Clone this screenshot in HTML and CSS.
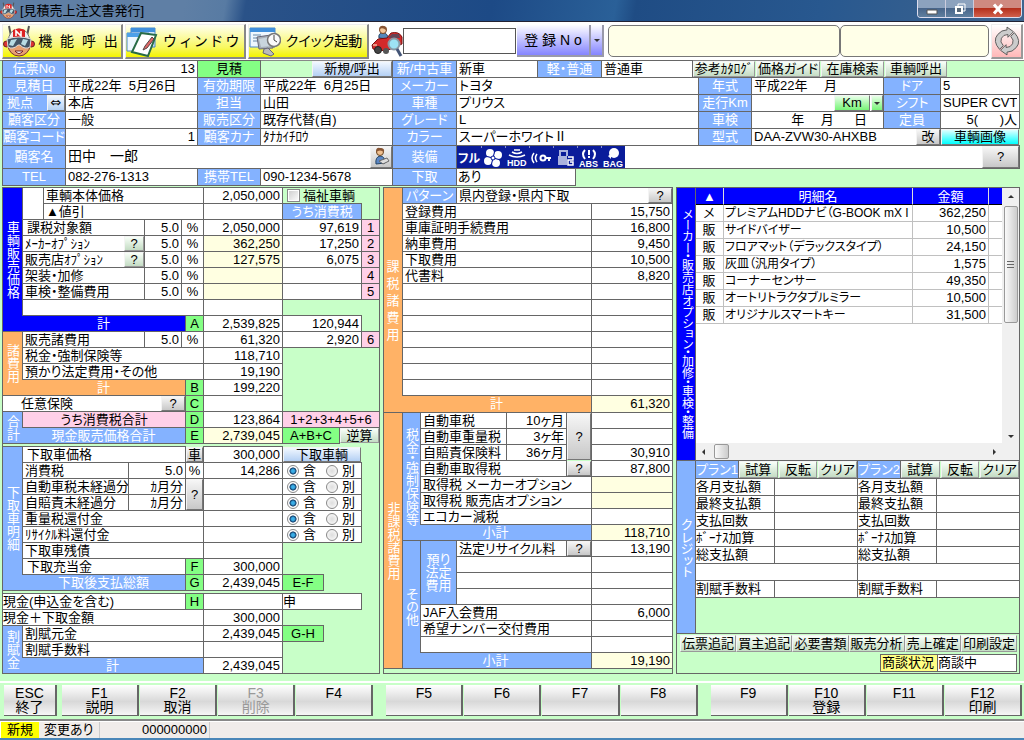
FILE: index.html
```html
<!DOCTYPE html>
<html lang="ja">
<head>
<meta charset="utf-8">
<title>見積売上注文書発行</title>
<link rel="stylesheet" href="styles.css">
</head>
<body>
<svg width="0" height="0" class="defs" aria-hidden="true">
  <symbol id="robot" viewBox="0 0 32 32">
    <path d="M8 11L6 1M24 11L26 1" stroke="#555" stroke-width="2"/>
    <circle cx="16" cy="20" r="11" fill="#e8a070" stroke="#733" stroke-width="1"/>
    <path d="M5 17Q6 4 16 4T27 17Z" fill="#eee" stroke="#777"/>
    <path d="M10 13V5Q16 2 22 5V13Z" fill="#d22"/>
    <path d="M13 11V6L18 11V6" stroke="#fff" stroke-width="1.6" fill="none"/>
    <circle cx="3.500" cy="19" r="3" fill="#d33" stroke="#622"/><circle cx="28.500" cy="19" r="3" fill="#d33" stroke="#622"/>
    <path d="M4 14Q16 10 28 14L27 22Q22 25 17 20H15Q10 25 5 22Z" fill="#456" stroke="#ddd"/>
    <path d="M8 15L14 14L10 21L6 20ZM20 14L25 15L22 21L18 19Z" fill="#b8dce4"/>
    <path d="M12 26Q16 31 20 26Z" fill="#fff" stroke="#722"/>
  </symbol>
  <symbol id="refresh" viewBox="0 0 28 30">
    <g fill="#ccc" stroke="#555" stroke-width="1">
      <path d="M6 24Q-2 15 4 8Q8 3 14 3V0L21 5L15 11V8Q10 8 8 12Q6 16 10 20Z"/>
      <path d="M22 6Q30 15 24 22Q20 27 14 27V30L7 25L13 19V22Q18 22 20 18Q22 14 18 10Z"/>
    </g>
  </symbol>
  <symbol id="person" viewBox="0 0 18 18">
    <path d="M4 17Q3 10 8 9Q13 9 13 16Z" fill="#5b86c4" stroke="#246"/>
    <circle cx="8" cy="5" r="3.500" fill="#f0c090" stroke="#642"/>
    <path d="M4 5Q4 0 8 1Q13 1 12 5Q8 2 4 5Z" fill="#853"/>
    <path d="M7 14L15 11L17 14L11 17Z" fill="#ddd" stroke="#666"/>
  </symbol>
</svg>

<header class="titlebar">
  <svg class="app-icon"><use href="#robot"/></svg>
  <span class="title">[見積売上注文書発行]</span>
  <div class="winbtns">
    <button aria-label="最小化"><svg width="12" height="12"><path d="M1 7h10v4H1z" fill="#fff" stroke="#555"/></svg></button>
    <button aria-label="元に戻す"><svg width="12" height="12"><path d="M4 1h7v7H4z" fill="none" stroke="#fff" stroke-width="1"/><path d="M2 4h6v6H2z" fill="#567" stroke="#fff" stroke-width="2"/></svg></button>
    <button class="close" aria-label="閉じる"><svg width="14" height="12"><path d="M3 1.500L11 10.500M11 1.500L3 10.500" stroke="#fff" stroke-width="3"/></svg></button>
  </div>
</header>

<nav class="toolbar">
  <button class="tool"><svg class="big"><use href="#robot"/></svg><span>機  能  呼  出</span></button>
  <button class="tool"><svg class="big" viewBox="0 0 32 32"><path d="M5 3h24v19H5z" fill="#cfe6fa" stroke="#4a86c8"/><path d="M5 3h24v4H5z" fill="#3f8fdc"/><path d="M1 8h22v18H1z" fill="#eef7fe" stroke="#4a86c8"/><path d="M1 8h22v4H1z" fill="#4da0e8"/><path d="M15 8L30 10L22 31L6 27Z" fill="#fff" stroke="#286b46" stroke-width="2"/><path d="M26 12L19 21L17 25L21 23L28 14Z" fill="#d66" stroke="#544"/></svg><span>ウ ィ ン ド ウ</span></button>
  <button class="tool"><svg class="big" viewBox="0 0 32 32"><path d="M1 3h25v19H1z" fill="#eef7fe" stroke="#4a86c8"/><path d="M1 3h25v4H1z" fill="#3f8fdc"/><path d="M4 10h8M4 13h8M4 16h6" stroke="#68a"/><path d="M8 12L22 10L24 23L10 24Z" fill="#a7afb8" stroke="#667"/><path d="M10 14L20 12L22 21L12 22Z" fill="#c9d5dd"/><path d="M15 24L14 28L22 31L25 29L19 23Z" fill="#bbb" stroke="#667"/><circle cx="25" cy="15" r="6.500" fill="#fafafa" stroke="#777" stroke-width="1.500"/><path d="M25 10v5l3 2" stroke="#444" fill="none"/></svg><span>クイック起動</span></button>
  <svg class="big car" viewBox="0 0 32 32"><path d="M8 13Q7 8 12 8Q17 8 17 14Z" fill="#58b" stroke="#246"/><circle cx="12" cy="5" r="3.500" fill="#f3c79a" stroke="#742"/><path d="M8 4Q9 0 13 1Q17 2 15 5Q12 2 8 4Z" fill="#853"/><path d="M1 20L7 14L16 13L20 8Q28 6 31 12L31 19L15 26L2 24Z" fill="#d42a2a" stroke="#711"/><path d="M17 13L21 9L28 9L29 13Z" fill="#645"/><circle cx="7" cy="25" r="3.500" fill="#444" stroke="#222"/><circle cx="15" cy="26" r="3" fill="#555"/><path d="M2 20h4" stroke="#ffd"/><circle cx="23" cy="19" r="5.500" fill="#9de3f4" stroke="#8a9aa5" stroke-width="2"/><path d="M26 24L30 31" stroke="#457" stroke-width="3"/></svg>
  <input class="search" aria-label="検索番号">
  <button class="reg">登 録 N o</button><button class="reg arrow" aria-label="検索種別"><i class="tri drop"></i></button>
  <div class="notice n1"></div><div class="notice n2"></div>
  <button class="reload" aria-label="更新"><svg width="26" height="30"><use href="#refresh"/></svg></button>
</nav>

<section class="head">
  <div class="head-left">
    <label class="c b" for="no">伝票No</label><input id="no" class="c r" value="13"><div class="c g">見積</div>
    <div class="fl call"><button class="bb">新規/呼出</button></div>
    <label class="c b" for="d1">見積日</label><input id="d1" class="c date" value="平成22年  5月26日"><label class="c b" for="d2">有効期限</label><input id="d2" class="c date" value="平成22年  6月25日">
    <div class="c b base"><label for="base">拠点</label><button class="bb" aria-label="拠点切替">⇔</button></div><input id="base" class="c" value="本店"><label class="c b" for="staff">担当</label><input id="staff" class="c" value="山田">
    <label class="c b" for="kk">顧客区分</label><input id="kk" class="c" value="一般"><label class="c b" for="hk">販売区分</label><input id="hk" class="c" value="既存代替(自)">
    <label class="c b" for="kc">顧客コード</label><input id="kc" class="c r" value="1"><label class="c b" for="kana">顧客カナ</label><input id="kana" class="c" value="ﾀﾅｶｲﾁﾛｳ">
    <label class="c b tall" for="name">顧客名</label><div class="c w s3 fl"><input id="name" class="name" value="田中　一郎"><button class="gb pers" aria-label="顧客情報"><svg width="18" height="18"><use href="#person"/></svg></button></div>
    <label class="c b" for="tel">TEL</label><input id="tel" class="c" value="082-276-1313"><label class="c b" for="mob">携帯TEL</label><input id="mob" class="c" value="090-1234-5678">
  </div>
  <div class="head-right">
    <div class="row1 s6">
      <label class="c b" for="nu">新/中古車</label><input id="nu" class="c" value="新車"><label class="c b" for="ks">軽・普通</label><input id="ks" class="c" value="普通車">
      <button class="gn">参考ｶﾀﾛｸﾞ</button><button class="gn">価格ガイド</button><button class="gn">在庫検索</button><button class="gn">車輌呼出</button>
    </div>
    <label class="c b" for="mk">メーカー</label><input id="mk" class="c" value="トヨタ"><label class="c b" for="yr">年式</label><input id="yr" class="c" value="平成22年　 月"><label class="c b" for="dr">ドア</label><input id="dr" class="c" value="5">
    <label class="c b" for="sy">車種</label><input id="sy" class="c" value="プリウス"><label class="c b" for="km">走行Km</label><div class="c w fl"><input id="km"><button class="km">Km</button><button class="km kmarrow" aria-label="単位"><i class="tri drop"></i></button></div><label class="c b" for="sh">シフト</label><input id="sh" class="c" value="SUPER CVT">
    <label class="c b" for="gr">グレード</label><input id="gr" class="c" value="L"><label class="c b" for="sk">車検</label><input id="sk" class="c shaken" value="年　 月　  日"><label class="c b" for="ti">定員</label><input id="ti" class="c r" value="5(      )人">
    <label class="c b" for="cl">カラー</label><input id="cl" class="c" value="スーパーホワイトⅡ"><label class="c b" for="kt">型式</label><div class="c w s2 fl"><input id="kt" value="DAA-ZVW30-AHXBB"><button class="gb kai">改</button></div><button class="cy">車輌画像</button>
    <div class="c b tall">装備</div><div class="c w s5 fl equip">
      <svg width="168" height="22" viewBox="0 0 168 22" role="img" aria-label="装備アイコン"><path d="M0 0h168v22H0z" fill="#0a1c9a"/><path d="M24 1h1M48 1h1M72 1h1M96 1h1M120 1h1M144 1h1" stroke="#fff"/><g fill="#fff">
        <text x="1" y="17" font-size="12" font-weight="bold">フル</text>
        <g transform="translate(36 12)"><ellipse cx="-3" cy="-5" rx="4" ry="4"/><ellipse cx="3" cy="5" rx="4" ry="4"/><ellipse cx="-5" cy="3" rx="4" ry="4"/><ellipse cx="5" cy="-3" rx="4" ry="4"/><path d="M-8 -2L8 2M-2 8L2 -8" stroke="#0a1c9a"/><circle r="2" stroke="#0a1c9a"/></g>
        <text class="sm" x="50" y="20">HDD</text><path d="M52 9Q60 13 68 9M55 6Q60 9 65 6M57 4h6" stroke="#fff" fill="none" stroke-width="1.500"/>
        <path d="M77 7q-4 5 0 10M80 8q-3 4 0 8" stroke="#fff" fill="none" stroke-width="1.500"/><circle cx="86" cy="12" r="2.500" fill="none" stroke="#fff" stroke-width="2"/><path d="M88 12h6M92 12v3" stroke="#fff" stroke-width="2"/>
        <path d="M101 10h9v9h-9z" fill="#aab2de"/><path d="M103 10V5h7v5" stroke="#aab2de" fill="none" stroke-width="2"/><path d="M111 11h5v3h-5v5h5v-3h-3" stroke="#fff" fill="none" stroke-width="1.500"/>
        <path d="M128 4q-4 4 0 9M136 4q4 4 0 9" stroke="#fff" fill="none" stroke-width="2"/><path d="M131 4h2v5h-2zM131 10h2v2h-2z"/><text class="sm" x="122" y="21">ABS</text>
        <circle cx="157" cy="7" r="5"/><path d="M151 10l3-2v5z"/><text class="sm" x="146" y="21">BAG</text></g></svg>
      <button class="gb q6" aria-label="装備ヘルプ">?</button></div>
    <label class="c b" for="st">下取</label><div class="fl s5"><input id="st" class="c trade" value="あり"></div>
  </div>
</section>

<main class="main">
<section class="panel">
  <div class="lg">
    <div class="c bl v r9"><span>車輌販売価格</span></div><div class="c w k2 rr2"></div>
    <label class="c w k3-7" for="a1">車輌本体価格</label><input id="a1" class="c r amt" value="2,050,000"><label class="welfare"><input type="checkbox">福祉車輌</label>
    <label class="c w k3-7" for="a2">▲値引</label><input id="a2" class="c r amt"><div class="c b k9">うち消費税</div>
    <label class="c w k2-4 ind" for="a3">課税対象額</label><input class="c r rate" aria-label="課税対象額 税率" value="5.0"><div class="c w pc">%</div><input id="a3" class="c r amt" value="2,050,000"><output class="c w r k9">97,619</output><div class="c p">1</div>
    <div class="c w k2-4 fl"><label for="a4">ﾒｰｶｰｵﾌﾟｼｮﾝ</label><button class="gn q" aria-label="メーカーオプション検索">?</button></div><input class="c r rate" aria-label="メーカーオプション 税率" value="5.0"><div class="c w pc">%</div><input id="a4" class="c r amt cr" value="362,250"><output class="c w r k9">17,250</output><div class="c p">2</div>
    <div class="c w k2-4 fl"><label for="a5">販売店ｵﾌﾟｼｮﾝ</label><button class="gn q" aria-label="販売店オプション検索">?</button></div><input class="c r rate" aria-label="販売店オプション 税率" value="5.0"><div class="c w pc">%</div><input id="a5" class="c r amt cr" value="127,575"><output class="c w r k9">6,075</output><div class="c p">3</div>
    <label class="c w k2-4" for="a6">架装・加修</label><input class="c r rate" aria-label="架装 税率" value="5.0"><div class="c w pc">%</div><input id="a6" class="c r amt cr"><output class="c w r k9"></output><div class="c p">4</div>
    <label class="c w k2-4" for="a7">車検・整備費用</label><input class="c r rate" aria-label="車検 税率" value="5.0"><div class="c w pc">%</div><input id="a7" class="c r amt cr"><output class="c w r k9"></output><div class="c p">5</div>
    <div class="c w k2-7"></div><output class="c w r amt"></output>
    <div class="c bl tot k2-6">計</div><div class="c g k7">A</div><output class="c w r amt">2,539,825</output><output class="c w r k9">120,944</output>
    <div class="c o v r4"><span>諸費用</span></div>
    <label class="c w k2-4" for="b1">販売諸費用</label><input class="c r rate" aria-label="販売諸費用 税率" value="5.0"><div class="c w pc">%</div><input id="b1" class="c r amt" value="61,320"><output class="c w r k9">2,920</output><div class="c p">6</div>
    <label class="c w k2-7" for="b2">税金・強制保険等</label><input id="b2" class="c r amt" value="118,710">
    <label class="c w k2-7" for="b3">預かり法定費用・その他</label><input id="b3" class="c r amt" value="19,190">
    <div class="c o tot k2-6">計</div><div class="c g k7">B</div><output class="c w r amt">199,220</output>
    <div class="c w k1-6 fl ins"><label for="c1">任意保険</label><button class="gb q" aria-label="任意保険検索">?</button></div><div class="c g k7">C</div><input id="c1" class="c r amt">
    <div class="c b v rr2"><span>合計</span></div><div class="c p k2-6">うち消費税合計</div><div class="c g k7">D</div><output class="c w r amt">123,864</output><div class="c p k9-10">1+2+3+4+5+6</div>
    <div class="c b tot k2-6">現金販売価格合計</div><div class="c g k7">E</div><output class="c cr r amt">2,739,045</output><div class="fl k9-10"><div class="c g grow">A+B+C</div><button class="gn rev">逆算</button></div>
  </div>
  <div class="lg">
    <div class="c b v r9"><span>下取車明細</span></div>
    <label class="c w k2-6 ind" for="e1">下取車価格</label><button class="gb k7">車</button><input id="e1" class="c r amt" value="300,000"><button class="bb k9">下取車輌</button>
    <label class="c w k2-3" for="e2">消費税</label><input class="c r k4-6" aria-label="消費税率" value="5.0"><div class="c w pc k7">%</div><input id="e2" class="c r amt" value="14,286"><div class="c w k9 rad"><label><input type="radio" name="r1" checked>含</label><label><input type="radio" name="r1">別</label></div>
    <label class="c w k2-3" for="e3">自動車税未経過分</label><div class="c w r k4-6">ｶ月分</div><button class="gb k7 rr2">?</button><input id="e3" class="c r amt"><div class="c w k9 rad"><label><input type="radio" name="r2" checked>含</label><label><input type="radio" name="r2">別</label></div>
    <label class="c w k2-3" for="e4">自賠責未経過分</label><div class="c w r k4-6">ｶ月分</div><input id="e4" class="c r amt"><div class="c w k9 rad"><label><input type="radio" name="r3" checked>含</label><label><input type="radio" name="r3">別</label></div>
    <label class="c w k2-7" for="e5">重量税還付金</label><input id="e5" class="c r amt"><div class="c w k9 rad"><label><input type="radio" name="r4" checked>含</label><label><input type="radio" name="r4">別</label></div>
    <label class="c w k2-7" for="e6">ﾘｻｲｸﾙ料還付金</label><input id="e6" class="c r amt"><div class="c w k9 rad"><label><input type="radio" name="r5" checked>含</label><label><input type="radio" name="r5">別</label></div>
    <label class="c w k2-7" for="e7">下取車残債</label><input id="e7" class="c r amt">
    <label class="c w k2-6 ind" for="e8">下取充当金</label><div class="c g k7">F</div><input id="e8" class="c r amt" value="300,000">
    <div class="c b tot k2-6">下取後支払総額</div><div class="c g k7">G</div><output class="c w r amt">2,439,045</output><div class="c g k9 half">E-F</div>
  </div>
  <div class="lg">
    <label class="c w k1-6 flush" for="f1">現金(申込金を含む)</label><div class="c g k7">H</div><input id="f1" class="c r amt"><input class="c k9 flush" aria-label="申込金" value="申">
    <label class="c w k1-7 flush" for="f2">現金＋下取金額</label><input id="f2" class="c r amt" value="300,000">
    <div class="c b v rr3"><span>割賦金</span></div>
    <label class="c w k2-7" for="f3">割賦元金</label><input id="f3" class="c r amt" value="2,439,045"><div class="c g k9 half">G-H</div>
    <label class="c w k2-7" for="f4">割賦手数料</label><input id="f4" class="c r amt">
    <div class="c b tot k2-7">計</div><output class="c w r amt">2,439,045</output>
  </div>
</section>

<section class="panel">
  <div class="mg m1">
    <div class="c o stack r14"><span>課税諸費用</span></div>
    <label class="c b m2-3" for="pt">パターン</label><div class="c w m4-7 fl"><input id="pt" value="県内登録・県内下取"><button class="gb q" aria-label="パターン検索">?</button></div>
    <input class="c m2-6" aria-label="費目1" value="登録費用"><input class="c r" aria-label="登録費用" value="15,750">
    <input class="c m2-6" aria-label="費目2" value="車庫証明手続費用"><input class="c r" aria-label="車庫証明" value="16,800">
    <input class="c m2-6" aria-label="費目3" value="納車費用"><input class="c r" aria-label="納車費用" value="9,450">
    <input class="c m2-6" aria-label="費目4" value="下取費用"><input class="c r" aria-label="下取費用" value="10,500">
    <input class="c m2-6" aria-label="費目5" value="代書料"><input class="c r" aria-label="代書料" value="8,820">
    <input class="c m2-6" aria-label="費目6"><input class="c r" aria-label="金額6">
    <input class="c m2-6" aria-label="費目7"><input class="c r" aria-label="金額7">
    <input class="c m2-6" aria-label="費目8"><input class="c r" aria-label="金額8">
    <input class="c m2-6" aria-label="費目9"><input class="c r" aria-label="金額9">
    <input class="c m2-6" aria-label="費目10"><input class="c r" aria-label="金額10">
    <input class="c m2-6" aria-label="費目11"><input class="c r" aria-label="金額11">
    <input class="c m2-6" aria-label="費目12"><input class="c r" aria-label="金額12">
    <div class="c o tot m2-6">計</div><output class="c cr r">61,320</output>
  </div>
  <div class="mg m2">
    <div class="c o v r16 low"><span>非課税諸費用</span></div>
    <div class="c b v r8"><span>税金・強制保険等</span></div>
    <label class="c w m3-4" for="g1">自動車税</label><input class="c r" aria-label="自動車税 月数" value="10ヶ月"><button class="gb rr3" aria-label="税額検索">?</button><input id="g1" class="c r">
    <label class="c w m3-4" for="g2">自動車重量税</label><input class="c r" aria-label="重量税 年数" value="3ヶ年"><input id="g2" class="c r m7">
    <label class="c w m3-4" for="g3">自賠責保険料</label><input class="c r" aria-label="自賠責 月数" value="36ヶ月"><input id="g3" class="c r m7" value="30,910">
    <label class="c w m3-5" for="g4">自動車取得税</label><button class="gb" aria-label="取得税検索">?</button><input id="g4" class="c r" value="87,800">
    <label class="c w m3-6" for="g5">取得税 メーカーオプション</label><input id="g5" class="c r cr">
    <label class="c w m3-6" for="g6">取得税 販売店オプション</label><input id="g6" class="c r cr">
    <label class="c w m3-6" for="g7">エコカー減税</label><input id="g7" class="c r">
    <div class="c b tot m3-6 sub">小計</div><output class="c cr r">118,710</output>
    <div class="c b v r8 low2"><span>その他</span></div>
    <div class="c b dep">預り<br>法定<br>費用</div>
    <label class="c w m4-5" for="h1">法定リサイクル料</label><button class="gb" aria-label="リサイクル料検索">?</button><input id="h1" class="c r" value="13,190">
    <input class="c m4-6" aria-label="法定費用2"><input class="c r" aria-label="法定費用額2">
    <input class="c m4-6" aria-label="法定費用3"><input class="c r" aria-label="法定費用額3">
    <input class="c m4-6" aria-label="法定費用4"><input class="c r" aria-label="法定費用額4">
    <label class="c w m3-6" for="h5">JAF入会費用</label><input id="h5" class="c r" value="6,000">
    <label class="c w m3-6" for="h6">希望ナンバー交付費用</label><input id="h6" class="c r">
    <input class="c m3-6" aria-label="その他費用"><input class="c r" aria-label="その他費用額">
    <div class="c b tot m3-6 sub">小計</div><output class="c cr r">19,190</output>
  </div>
</section>

<section class="panel rp">
  <div class="opts">
    <div class="c bl v opv"><span>メーカー・販売店オプション・加修・車検・整備</span></div>
    <div class="c w listwrap">
      <div class="list">
        <table>
          <colgroup><col class="t1"><col><col class="t3"><col class="t4"></colgroup>
          <thead><tr><th>▲</th><th>明細名</th><th>金額</th><th></th></tr></thead>
          <tbody>
            <tr><td>メ</td><td>プレミアムHDDナビ（G-BOOK mX I</td><td>362,250</td><td></td></tr>
            <tr><td>販</td><td>サイドバイザー</td><td>10,500</td><td></td></tr>
            <tr><td>販</td><td>フロアマット（デラックスタイプ）</td><td>24,150</td><td></td></tr>
            <tr><td>販</td><td>灰皿（汎用タイプ）</td><td>1,575</td><td></td></tr>
            <tr><td>販</td><td>コーナーセンサー</td><td>49,350</td><td></td></tr>
            <tr><td>販</td><td>オートリトラクタブルミラー</td><td>10,500</td><td></td></tr>
            <tr><td>販</td><td>オリジナルスマートキー</td><td>31,500</td><td></td></tr>
          </tbody>
        </table>
        <div class="hs"><i class="tri tl"></i><i class="thumb ht"></i><i class="tri trr"></i></div>
      </div>
      <div class="vs"><i class="tri tu"></i><i class="thumb vt"></i><i class="tri td"></i></div>
    </div>
  </div>
  <div class="credit">
    <div class="c b v"><span>クレジット</span></div>
    <div class="plans">
      <div class="plan">
        <div class="ph"><div class="c b">プラン1</div><button class="gn">試算</button><button class="gn">反転</button><button class="gn">クリア</button></div>
        <label class="c w flush" for="p1">各月支払額</label><input id="p1" class="c r">
        <label class="c w flush" for="p2">最終支払額</label><input id="p2" class="c r">
        <label class="c w flush" for="p3">支払回数</label><input id="p3" class="c r">
        <label class="c w flush" for="p4">ﾎﾞｰﾅｽ加算</label><input id="p4" class="c r">
        <label class="c w flush" for="p5">総支払額</label><input id="p5" class="c r">
        <div class="c w s2"></div>
        <label class="c w flush" for="p6">割賦手数料</label><input id="p6" class="c r">
      </div>
      <div class="plan">
        <div class="ph"><div class="c b">プラン2</div><button class="gn">試算</button><button class="gn">反転</button><button class="gn">クリア</button></div>
        <label class="c w flush" for="q1">各月支払額</label><input id="q1" class="c r">
        <label class="c w flush" for="q2">最終支払額</label><input id="q2" class="c r">
        <label class="c w flush" for="q3">支払回数</label><input id="q3" class="c r">
        <label class="c w flush" for="q4">ﾎﾞｰﾅｽ加算</label><input id="q4" class="c r">
        <label class="c w flush" for="q5">総支払額</label><input id="q5" class="c r">
        <div class="c w s2"></div>
        <label class="c w flush" for="q6">割賦手数料</label><input id="q6" class="c r">
      </div>
    </div>
  </div>
  <div class="acts"><button class="gn">伝票追記</button><button class="gn">買主追記</button><button class="gn">必要書類</button><button class="gn">販売分析</button><button class="gn">売上確定</button><button class="gn">印刷設定</button></div>
  <div class="nego"><label class="c y" for="ng">商談状況</label><input id="ng" class="c" value="商談中"></div>
</section>
</main>

<footer>
  <div class="keys">
    <div class="kg esc"><button>ESC<br>終了</button></div>
    <div class="kg"><button><span>F1<br>説明</span></button><button><span>F2<br>取消</span></button><button disabled><span>F3<br>削除</span></button><button><span>F4<br>&nbsp;</span></button></div>
    <div class="kg"><button><span>F5<br>&nbsp;</span></button><button><span>F6<br>&nbsp;</span></button><button><span>F7<br>&nbsp;</span></button><button><span>F8<br>&nbsp;</span></button></div>
    <div class="kg"><button><span>F9<br>&nbsp;</span></button><button><span>F10<br>登録</span></button><button><span>F11<br>&nbsp;</span></button><button><span>F12<br>印刷</span></button></div>
  </div>
  <div class="status"><span class="new">新規</span><span class="chg">変更あり</span><span class="num">000000000</span></div>
</footer>
</body>
</html>
```
FILE: styles.css
```css
* { box-sizing: border-box; }
:root { --line: #666; --sky: #84b2ff; --mint: #c8ffc8; --row: 15px; }
body {
  margin: 0; min-height: 100vh; display: flex; flex-direction: column;
  background: var(--mint); color: #000;
  font: 13px/15px "Liberation Sans", "Noto Sans CJK JP", sans-serif;
  font-feature-settings: "palt";
}
input, button { font: inherit; color: inherit; font-feature-settings: inherit; margin: 0; min-width: 0; border-radius: 0; }
input { border: 0; padding: 0 2px; background: #fff; width: 100%; }
button { padding: 0; white-space: nowrap; line-height: 13px; overflow: hidden; }
.defs { position: absolute; }

.titlebar { height: 22px; display: flex; align-items: center; background: linear-gradient(100deg, #5f7fa5 0 18%, #587ba3 22%, #2a5288 24%, #1d4a86 48%, #2a6098 60%, #1f4c84 62%, #28588f 80%, #3f658f); border-bottom: 1px solid #223; }
.app-icon { width: 17px; height: 17px; }
.title { margin-left: 3px; }
.winbtns { margin-left: auto; margin-right: 2px; display: flex; align-self: start; height: 18px; border: 1px solid #dde; border-top: 0; border-radius: 0 0 4px 4px; overflow: hidden; }
.winbtns button { width: 28px; border: 0; border-right: 1px solid #ccd; background: linear-gradient(#8ca2be 45%, #48658a 50%, #5f7f9f); }
.winbtns button svg { vertical-align: middle; }
.winbtns .close { width: 47px; border: 0; background: linear-gradient(#cf8a80 45%, #b4301c 50%, #d0604c); }

.toolbar { height: 39px; display: flex; background: #fff; padding: 2px 1px 0 2px; border-bottom: 1px solid #888; }
.tool { width: 121px; height: 35px; margin-right: 2px; display: flex; align-items: center; border: 1px solid #eee; border-right: 2px solid #888; border-bottom: 2px solid #888; background: linear-gradient(#fffff0, #f8f860 70%, #f4f400); }
.tool span { flex: 1; white-space: pre; font-size: 14px; line-height: 20px; text-align: center; }
.big { width: 32px; height: 32px; flex: none; }
.car { margin-top: 1px; }
.search { width: 113px; height: 26px; margin-top: 4px; border: 1px solid #555; margin-right: 1px; }
.reg { width: 74px; height: 32px; margin-top: 1px; font-size: 14px; border: 0; border-right: 2px solid #99a; border-bottom: 2px solid #99a; background: linear-gradient(#fdfdff, #8484ff); white-space: pre; }
.arrow { width: 13px; }
.notice { height: 32px; margin-top: 1px; background: #ffffe8; border: 1px solid #777; border-radius: 5px; }
.n1 { flex: 232; margin-left: 4px; }
.n2 { flex: 149; margin-right: 2px; }
.reload { width: 32px; height: 35px; border: 1px solid #eee; border-right: 2px solid #999; border-bottom: 2px solid #999; background: linear-gradient(#fff, #ffb8b8); }
.reload svg { vertical-align: middle; }

/* ruled cells: every cell draws its own 1px frame into the grid gap */
.c { box-shadow: 0 0 0 1px var(--line); padding: 0 2px; white-space: nowrap; min-width: 0; min-height: 0; text-align: left; }
.w { background: #fff; }
.b, .bl, .o, .g, .p { text-align: center; color: #fff; padding: 0; }
.b { background: var(--sky); }
.bl { background: #00f; }
.o { background: #ffb266; }
.g { background: #84ff84; color: #000; }
.p { background: #ffd0e8; color: #000; }
.cr { background: #ffffe1; }
.y { background: #ffff84; }
.r { text-align: right; }
.ind { padding-left: 4px; }
.flush { padding-left: 0; }
.fl { display: flex; gap: 1px; min-width: 0; }
.c.fl { padding-right: 0; }
.fl > label { flex: 1; }
.fl > input { flex: 1; padding: 0; }
.grow { flex: 1; }
.s2 { grid-column: span 2; }
.s3 { grid-column: span 3; }
.s5 { grid-column: span 5; }
.s6 { grid-column: span 6; }

.gb, .bb, .gn, .cy, .km { border: 1px solid #f4f4f4; border-right-color: #777; border-bottom-color: #777; background: linear-gradient(#f6f6f6, #c8c8c8); }
.bb { background: linear-gradient(#f2f8ff, #b4d0f4); }
.gn { background: linear-gradient(#f8fff8, #c4dcc4); border-right-color: #999; border-bottom-color: #999; }
.cy { background: linear-gradient(#e0ffff, #00ffff); }
.km { background: linear-gradient(#e8ffe8, #78f478); width: 36px; }
.kmarrow { width: 12px; }

.head { display: grid; grid-template-columns: 389fr 626fr; gap: 1px; padding: 0 5px 0 3px; line-height: 16px; }
.head-left, .head-right { display: grid; gap: 1px; grid-template-rows: repeat(5, 16px) 22px 16px; }
.head-left { grid-template-columns: 62px 1fr 62px 1fr; }
.head-right { grid-template-columns: 63px 1fr 52px 131px 56px 78px; }
.head input { line-height: 16px; }
.head button { line-height: 14px; }
.call .bb { width: 80px; margin-left: auto; }
.base { display: flex; padding-left: 4px; }
.base .bb { width: 18px; margin-left: auto; color: #000; font-family: "DejaVu Sans", sans-serif; }
.head .tall { line-height: 22px; }
.head .name { line-height: 18px; padding-bottom: 3px; font-size: 14px; }
.pers { width: 22px; }
.row1 { display: grid; gap: 1px; grid-template-columns: 63px 80px 63px 90px 62px 64px 63px 62px; }
.head .date, .head #name { white-space: pre; }
.shaken { text-align: right; padding-right: 16px; }
.kai { width: 24px; }
.equip { padding: 0; justify-content: space-between; }
.equip text { font-family: "Noto Sans CJK JP", sans-serif; }
.equip .sm { font: bold 9px "Liberation Sans", sans-serif; }
.q6 { width: 37px; }
.fl > .trade { flex: none; width: 118px; padding: 0 1px; }

.main { display: grid; grid-template-columns: 376fr 288fr 342fr; gap: 5px; padding: 3px 5px 0 3px; }
.panel { box-shadow: 0 0 0 1px var(--line); min-width: 0; }

.lg { display: grid; gap: 1px; grid-auto-rows: var(--row); grid-template-columns: 19px 20px 1fr 15px 36px 3px 17px 78px 78px 17px; }
.lg + .lg { margin-top: 4px; }
.v { display: flex; align-items: center; justify-content: center; }
.v span { writing-mode: vertical-rl; line-height: 17px; font-feature-settings: "vpal"; }
.stack { display: flex; align-items: center; justify-content: center; }
.stack span { width: 13px; line-height: 17px; white-space: normal; word-break: break-all; }
.tot { margin-left: -1px; box-shadow: 0 -1px var(--line), 0 1px var(--line); }
.lg > .v { grid-column: 1; }
.k2 { grid-column: 2; }
.k7 { grid-column: 7; }
.k9 { grid-column: 9; }
.amt { grid-column: 8; }
.rate { grid-column: 5; }
.pc { grid-column: 6 / 8; text-align: center; }
.pc.k7 { grid-column: 7; }
.k1-6 { grid-column: 1 / 7; }
.k1-7 { grid-column: 1 / 8; }
.k2-3 { grid-column: 2 / 4; }
.k2-4 { grid-column: 2 / 5; }
.k2-6 { grid-column: 2 / 7; }
.k2-7 { grid-column: 2 / 8; }
.k3-7 { grid-column: 3 / 8; }
.k4-6 { grid-column: 4 / 7; }
.k9-10 { grid-column: 9 / 11; }
.rr2 { grid-row: span 2; }
.rr3 { grid-row: span 3; }
.r4 { grid-row: span 4; }
.r8 { grid-row: span 8; }
.r9 { grid-row: span 9; }
.r14 { grid-row: span 14; }
.r16 { grid-row: span 16; }
.half { width: 40px; }
.q { width: 20px; }
.gb.q { width: 24px; }
.ins { padding-left: 18px; }
.rev { width: 39px; }
.welfare { grid-column: 9 / 11; display: flex; align-items: center; gap: 3px; padding-left: 4px; }
.welfare input { appearance: none; width: 13px; height: 13px; border: 1px solid #888; background: linear-gradient(135deg, #ccc, #fff); box-shadow: inset 0 0 0 1px #fff; }
.rad { display: flex; justify-content: space-between; padding: 0 6px 0 4px; }
.rad label { display: flex; align-items: center; gap: 4px; }
.rad input { appearance: none; width: 12px; height: 12px; padding: 0; border: 1px solid #888; border-radius: 50%; background: radial-gradient(#ddd, #fff); }
.rad input:checked { background: radial-gradient(#3aaee8 0 20%, #123a66 45%, #fff 55%); }

.mg { display: grid; gap: 1px; grid-auto-rows: var(--row); grid-template-columns: 18px 17px 35px 1fr 59px 24px 80px; }
.m1 { grid-template-rows: repeat(13, 15px) 16px; }
.m2 { margin-top: 1px; margin-bottom: 5px; }
.m2-3 { grid-column: 2 / 4; }
.m2-6 { grid-column: 2 / 7; }
.m3-4 { grid-column: 3 / 5; }
.m3-5 { grid-column: 3 / 6; }
.m3-6 { grid-column: 3 / 7; }
.m4-5 { grid-column: 4 / 6; }
.m4-6 { grid-column: 4 / 7; }
.m4-7 { grid-column: 4 / 8; }
.m7 { grid-column: 7; }
.dep { grid-row: span 4; line-height: 13px; display: flex; align-items: center; justify-content: center; }
.low2 { padding-top: 4px; }
.sub { padding-right: 20px; }

.rp { display: flex; flex-direction: column; }
.opts { display: grid; grid-template-columns: 18px 1fr; gap: 1px; height: 272px; }
.opv { font-size: 12px; }
.listwrap { display: flex; padding: 0; overflow: hidden; }
.list { flex: 1; min-width: 0; display: flex; flex-direction: column; }
table { width: 100%; table-layout: fixed; border-collapse: separate; border-spacing: 0; }
.t1 { width: 28px; }
.t3 { width: 76px; }
.t4 { width: 13px; }
th { height: 17px; padding: 0; background: #00f; color: #fff; font-weight: normal; text-align: center; border-right: 1px solid #ddd; border-bottom: 1px solid #000; line-height: 15px; }
td { height: 17px; padding: 0 2px 0 1px; border-right: 1px solid #c0c0c0; border-bottom: 1px solid #c0c0c0; line-height: 16px; white-space: nowrap; overflow: hidden; }
td:first-child { text-align: center; }
td:nth-child(2) { font-size: 12px; padding-right: 0; }
td:nth-child(3) { text-align: right; }
td:last-child, th:last-child { border-right: 0; }
.hs { margin-top: auto; height: 17px; background: #f0f0f0; display: flex; align-items: center; padding: 0 6px; }
.vs { width: 17px; background: #f0f0f0; display: flex; flex-direction: column; align-items: center; padding: 7px 0 22px; }
.tri { border: 3px solid transparent; width: 0; height: 0; }
.tu { border-bottom-color: #333; border-top: 0; }
.td, .drop { border-top-color: #333; border-bottom: 0; }
.td { margin-top: auto; }
.drop { display: inline-block; vertical-align: middle; }
.tl { border-right-color: #333; border-left: 0; }
.trr { border-left-color: #333; border-right: 0; margin-left: auto; }
.thumb { border: 1px solid #999; border-radius: 2px; background: linear-gradient(90deg, #fafafa, #ccc); }
.vt { width: 14px; height: 117px; margin-top: 8px; display: flex; align-items: center; justify-content: center; }
.vt::after { content: ""; width: 7px; height: 8px; background: repeating-linear-gradient(#666 0 1px, transparent 1px 3px); }
.ht { width: 15px; height: 15px; margin-left: 9px; }
.credit { display: grid; grid-template-columns: 18px 1fr; gap: 1px; height: 172px; margin-top: 1px; box-shadow: 0 1px var(--line); }
.plans { display: grid; grid-template-columns: 1fr 1fr; gap: 1px; align-items: start; }
.plan { display: grid; grid-template-columns: 78px 1fr; grid-template-rows: 17px; grid-auto-rows: 16px; gap: 1px; line-height: 16px; }
.ph { grid-column: span 2; display: grid; grid-template-columns: 42px 1fr 1fr 1fr; gap: 1px; line-height: 17px; }
.ph button { line-height: 15px; }
.acts { display: grid; grid-template-columns: repeat(6, 1fr); margin: 2px 2px 0 3px; }
.acts button { height: 17px; }
.nego { display: flex; justify-content: flex-end; gap: 1px; margin: 3px 3px 2px 0; line-height: 16px; }
.nego .c { height: 16px; }
.nego label { width: 56px; padding: 0 1px; }
.nego input { width: 78px; padding: 0; }

footer { margin-top: auto; }
.keys { display: flex; gap: 13px; padding: 2px 2px 3px 4px; border-top: 2px solid #fff; border-bottom: 2px solid #888; }
.kg { display: grid; flex: 311; grid-auto-flow: column; grid-auto-columns: 1fr; gap: 1px; }
.kg.esc { flex: none; width: 53px; margin-right: -8px; }
.keys button { height: 31px; border: 0; border-right: 2px solid #666; border-bottom: 1px solid #666; background: linear-gradient(#fff, #d8d8d8 55%, #f6f6f6); font-size: 14px; line-height: 14px; text-align: center; }
.keys button:disabled { color: #999; }
.status { height: 19px; background: #f0ecea; border-top: 1px solid #fff; border-bottom: 2px solid #4a86b8; display: flex; line-height: 16px; }
.new { width: 39px; background: #ff0; text-align: center; border-left: 1px solid #fff; }
.chg { width: 61px; padding-left: 5px; border-right: 1px solid #ccc; }
.num { width: 110px; text-align: right; padding-right: 2px; border-right: 1px solid #ccc; }
```
